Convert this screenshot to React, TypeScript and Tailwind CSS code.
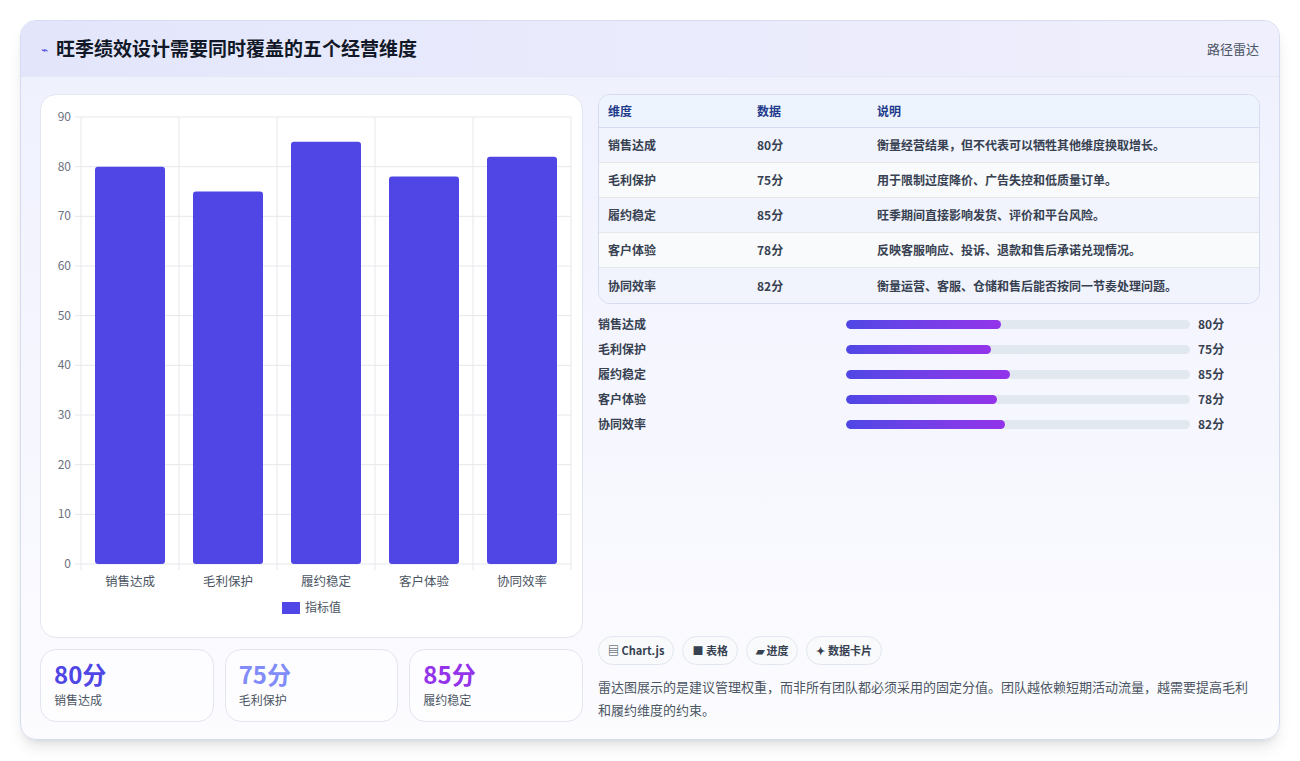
import React from "react";

const rows = [
  ["销售达成", 80, "衡量经营结果，但不代表可以牺牲其他维度换取增长。"],
  ["毛利保护", 75, "用于限制过度降价、广告失控和低质量订单。"],
  ["履约稳定", 85, "旺季期间直接影响发货、评价和平台风险。"],
  ["客户体验", 78, "反映客服响应、投诉、退款和售后承诺兑现情况。"],
  ["协同效率", 82, "衡量运营、客服、仓储和售后能否按同一节奏处理问题。"],
] as const;

function Chart() {
  const x0 = 40, x1 = 530, y0 = 22, y1 = 469;
  const h = (v: number) => ((y1 - y0) * v) / 90;
  const cw = (x1 - x0) / 5;
  return (
    <svg width="542" height="543" className="block">
      {[0, 10, 20, 30, 40, 50, 60, 70, 80, 90].map((t) => {
        const y = y1 - h(t);
        return (
          <g key={t}>
            <line x1={x0 - 6} x2={x1} y1={y} y2={y} stroke="#e5e7eb" />
            <text x={x0 - 10} y={y + 4} textAnchor="end" fontSize="12" fill="#6b7280">{t}</text>
          </g>
        );
      })}
      {[0, 1, 2, 3, 4, 5].map((i) => (
        <line key={i} x1={x0 + i * cw} x2={x0 + i * cw} y1={y0} y2={y1 + 6} stroke="#e5e7eb" />
      ))}
      {rows.map(([n, v], i) => (
        <g key={n}>
          <rect x={x0 + i * cw + 14} y={y1 - h(v)} width={cw - 28} height={h(v)} rx="3" fill="#4f46e5" />
          <text x={x0 + i * cw + cw / 2} y={y1 + 22} textAnchor="middle" fontSize="12.5" fill="#4b5563">{n}</text>
        </g>
      ))}
      <rect x="241" y="507" width="18" height="12" fill="#4f46e5" />
      <text x="264" y="517" fontSize="12" fill="#4b5563">指标值</text>
    </svg>
  );
}

export default function App() {
  return (
    <div className="w-[1300px] h-[761px] bg-white p-5" style={{ fontFamily: "'Noto Sans CJK SC', 'Noto Sans', sans-serif" }}>
      <div className="h-[720px] rounded-2xl border border-[#d6dcef] shadow-lg bg-gradient-to-b from-[#eef0fd] to-[#fcfcff] overflow-hidden flex flex-col">
        <div className="h-[56px] flex items-center justify-between px-5 bg-gradient-to-r from-[#e3e6fb] to-[#f0effd] border-b border-[#e2e6f5]">
          <div className="flex items-center gap-2">
            <span className="text-[#4f46e5] text-xs">⌁</span>
            <span className="text-[19px] font-bold text-[#111827]">旺季绩效设计需要同时覆盖的五个经营维度</span>
          </div>
          <span className="text-[13px] text-[#4b5563]">路径雷达</span>
        </div>
        <div className="flex gap-[15px] px-[19px] pt-[17px] flex-1">
          <div className="w-[543px] flex flex-col gap-[11px]">
            <div className="h-[544px] bg-white rounded-2xl border border-[#e2e6f0]"><Chart /></div>
            <div className="flex gap-[11px]">
              {[["80分", "销售达成", "text-[#4f46e5]"], ["75分", "毛利保护", "text-[#818cf8]"], ["85分", "履约稳定", "text-[#9333ea]"]].map(([v, l, c]) => (
                <div key={l} className="flex-1 h-[73px] rounded-2xl border border-[#e2e6f0] bg-white/60 px-[13px] pt-[9px]">
                  <div className={`text-[24px] font-bold leading-[30px] ${c}`}>{v}</div>
                  <div className="text-xs text-[#4b5563] mt-[3px]">{l}</div>
                </div>
              ))}
            </div>
          </div>
          <div className="flex-1 flex flex-col">
            <div className="rounded-xl border border-[#d6dcef] overflow-hidden text-xs text-[#374151] font-semibold">
              <div className="flex h-[33px] items-center bg-[#eef4fe] text-[#1e3a8a] border-b border-[#d6dcef]">
                <div className="w-[158px] pl-[9px]">维度</div><div className="w-[120px]">数据</div><div>说明</div>
              </div>
              {rows.map(([n, v, d], i) => (
                <div key={n} className={`flex h-[35px] items-center ${i % 2 ? "bg-[#f8fafc]" : "bg-[#f1f3fd]"} ${i < 4 ? "border-b border-[#e5e7eb]" : ""}`}>
                  <div className="w-[158px] pl-[9px]">{n}</div><div className="w-[120px]">{v}分</div><div>{d}</div>
                </div>
              ))}
            </div>
            <div className="flex flex-col gap-[7px] mt-[11px] text-xs font-semibold text-[#374151]">
              {rows.map(([n, v]) => (
                <div key={n} className="flex items-center h-[18px]">
                  <div className="w-[248px]">{n}</div>
                  <div className="w-[344px] h-[9px] rounded-full bg-[#e2e8f0] overflow-hidden">
                    <div className="h-full rounded-full bg-gradient-to-r from-[#4f46e5] to-[#9333ea]" style={{ width: `${v * 0.5625}%` }} />
                  </div>
                  <div className="ml-2">{v}分</div>
                </div>
              ))}
            </div>
            <div className="flex-1" />
            <div className="flex gap-2 text-[11px] font-semibold text-[#374151]">
              {["▤ Chart.js", "■ 表格", "▰ 进度", "✦ 数据卡片"].map((t) => (
                <span key={t} className="h-[29px] px-[9px] flex items-center rounded-full border border-[#e2e6f0] bg-[#f8fafc]">{t}</span>
              ))}
            </div>
            <p className="mt-[10px] mb-[18px] text-[13px] leading-[23px] text-[#4b5563]">雷达图展示的是建议管理权重，而非所有团队都必须采用的固定分值。团队越依赖短期活动流量，越需要提高毛利和履约维度的约束。</p>
          </div>
        </div>
      </div>
    </div>
  );
}
